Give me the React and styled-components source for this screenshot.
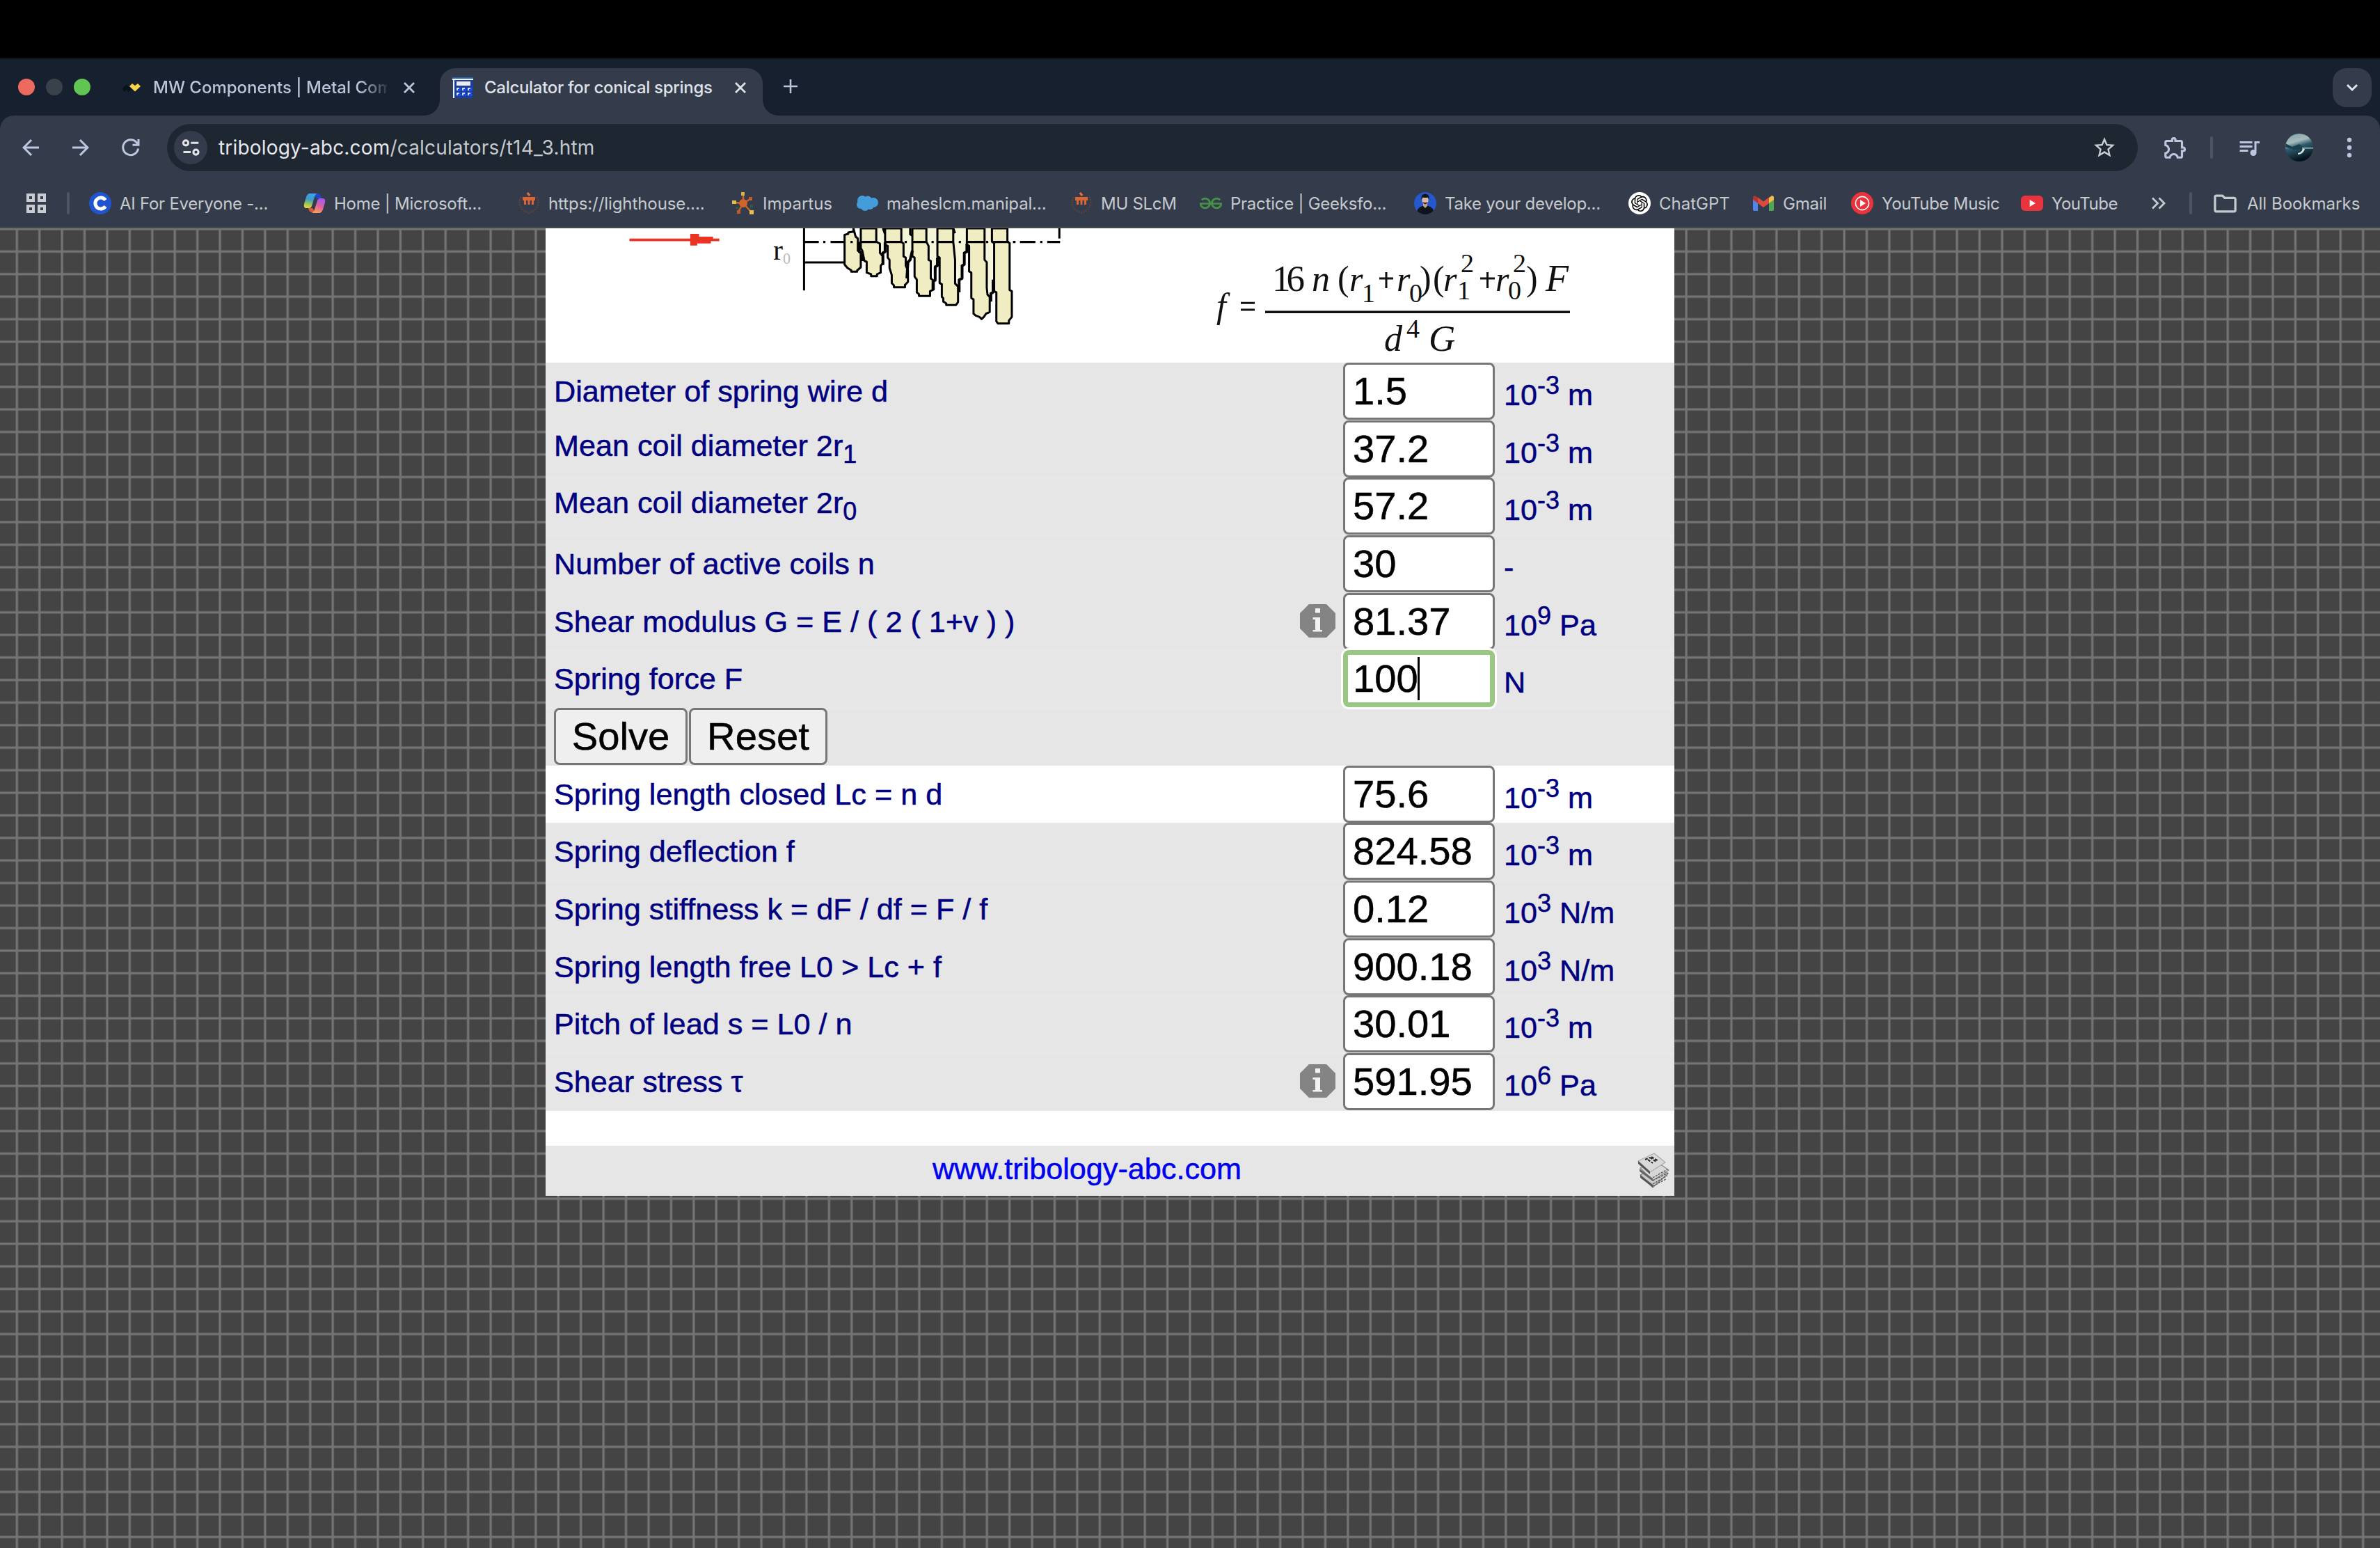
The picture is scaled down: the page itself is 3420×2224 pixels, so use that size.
import React from "react";
import styled, { createGlobalStyle, css } from "styled-components";
import {
  MdArrowBack,
  MdArrowForward,
  MdStarBorder,
  MdOutlineExtension,
  MdQueueMusic,
  MdOutlineFolder,
} from "react-icons/md";
import { SiOpenai, SiGeeksforgeeks } from "react-icons/si";

const Global = createGlobalStyle`
  * { box-sizing: border-box; }
  html, body { margin: 0; padding: 0; background: #000; }
  body { width: 3420px; height: 2224px; overflow: hidden; }
`;

const ui = `Inter, "Liberation Sans", sans-serif`;
const arial = `"Liberation Sans", Arial, sans-serif`;

const Screen = styled.div`
  width: 3420px;
  height: 2224px;
  display: flex;
  flex-direction: column;
  overflow: hidden;
`;

const Notch = styled.div`
  flex: none;
  height: 84px;
  background: #000;
`;

/* ---------- browser chrome ---------- */

const TabStrip = styled.div`
  flex: none;
  height: 82px;
  background: #17202e;
  display: flex;
  align-items: flex-start;
  font-family: ${ui};
`;

const Lights = styled.div`
  display: flex;
  gap: 16px;
  padding: 29px 0 0 26px;
  width: 174px;
`;

const Light = styled.span`
  width: 24px;
  height: 24px;
  border-radius: 50%;
  background: ${(p) => p.$color};
`;

const Tab = styled.div`
  position: relative;
  display: flex;
  align-items: center;
  height: 68px;
  margin-top: 14px;
  padding: 0 0 12px ${(p) => p.$pad}px;
  width: ${(p) => p.$width}px;
  font-size: 24px;
  font-weight: 450;
  color: ${(p) => (p.$active ? "#dfe1e8" : "#bcc4da")};
  ${(p) =>
    p.$active &&
    css`
      background: #343c4b;
      border-radius: 22px 22px 0 0;
      &::before,
      &::after {
        content: "";
        position: absolute;
        bottom: 0;
        width: 22px;
        height: 22px;
      }
      &::before {
        left: -22px;
        background: radial-gradient(circle at 0 0, transparent 21.5px, #343c4b 22px);
      }
      &::after {
        right: -22px;
        background: radial-gradient(circle at 100% 0, transparent 21.5px, #343c4b 22px);
      }
    `}
`;

const TabTitle = styled.span`
  flex: none;
  width: ${(p) => p.$width}px;
  margin-left: ${(p) => p.$gap}px;
  white-space: nowrap;
  line-height: 36px;
  letter-spacing: ${(p) => p.$ls}px;
  ${(p) =>
    p.$fade &&
    css`
      mask-image: linear-gradient(90deg, #000 88%, rgba(0, 0, 0, 0.15) 100%);
    `}
`;

const CloseButton = styled.span`
  display: flex;
  margin-left: ${(p) => p.$gap}px;
`;

const NewTab = styled.span`
  display: flex;
  margin: 30px 0 0 30px;
`;

const TabSearch = styled.span`
  display: flex;
  align-items: center;
  justify-content: center;
  width: 56px;
  height: 56px;
  margin: 14px 12px 0 auto;
  border-radius: 20px;
  background: #343c4b;
`;

const ChromeBody = styled.div`
  flex: none;
  height: 162px;
  background: #17202e;
`;

const ChromePanel = styled.div`
  height: 162px;
  background: #343c4b;
  border-bottom: 2px solid #46484c;
  border-radius: 20px 20px 0 0;
  font-family: ${ui};
`;

const Toolbar = styled.div`
  display: flex;
  align-items: center;
  height: 92px;
  padding: 0 29px 0 26px;
  color: #bcc6df;
`;

const NavButton = styled.span`
  display: flex;
  width: 36px;
  margin-right: ${(p) => p.$after}px;
`;

const Omnibox = styled.div`
  display: flex;
  align-items: center;
  width: 2832px;
  height: 68px;
  padding: 0 30px 0 10px;
  border-radius: 34px;
  background: #1d2631;
`;

const SiteInfo = styled.span`
  display: flex;
  align-items: center;
  justify-content: center;
  width: 48px;
  height: 48px;
  border-radius: 50%;
  background: #343c4b;
`;

const Address = styled.span`
  flex: 1;
  margin-left: 16px;
  font-size: 28px;
  letter-spacing: 0.18px;
  color: #c5c8cd;
  b {
    font-weight: 400;
    color: #e6e7ec;
  }
`;

const Icon = styled.span`
  display: flex;
  flex: none;
  color: ${(p) => p.$color || "inherit"};
  margin-left: ${(p) => p.$left || 0}px;
`;

const Divider = styled.span`
  flex: none;
  width: 4px;
  height: 32px;
  margin-left: ${(p) => p.$left}px;
  border-radius: 2px;
  background: #4c5565;
`;

const BookmarkBar = styled.div`
  display: flex;
  align-items: center;
  height: 68px;
  padding-left: 38px;
  color: #c6c9ce;
  font-size: 24px;
`;

const Bookmarks = styled.div`
  display: flex;
  align-items: center;
  margin-left: 28px;
`;

const Bookmark = styled.span`
  display: flex;
  align-items: center;
  flex: none;
  gap: 12px;
  width: ${(p) => p.$width}px;
  white-space: nowrap;
  letter-spacing: ${(p) => p.$ls || 0}px;
  svg {
    flex: none;
  }
`;

/* ---------- page ---------- */

const line = "#747474";
const clear = "rgba(116,116,116,0)";

const Page = styled.main`
  flex: 1;
  padding-left: 784px;
  background:
    repeating-linear-gradient(90deg, ${clear} 21.7px, ${line} 23.6px, ${line} 25px, ${clear} 26.9px, ${clear} 54.117px),
    repeating-linear-gradient(180deg, ${clear} -1.6px, ${line} 0.3px, ${line} 1.7px, ${clear} 3.6px, ${clear} 30.8px),
    #444;
`;

const Sheet = styled.div`
  width: 1622px;
  background: #fff;
  font-family: ${arial};
`;

const Figures = styled.div`
  display: flex;
  height: 193px;
`;

const Row = styled.div`
  display: grid;
  grid-template-columns: 1067px 66px 231px 1fr;
  align-items: start;
  height: 82.66px;
  padding-left: 12px;
  background: ${(p) => (p.$white ? "#fff" : "#e6e6e6")};
  box-shadow: ${(p) => (p.$rule ? "inset 0 1px 0 #ebebeb" : "none")};
  color: #000080;
  font-size: 43.2px;
  -webkit-text-stroke: 0.5px currentColor;
`;

const Label = styled.span`
  line-height: 48px;
  padding-top: ${(p) => p.$top}px;
  white-space: nowrap;
  sub {
    font-size: 36px;
    line-height: 0;
    vertical-align: -10px;
  }
`;

const InfoSlot = styled.span`
  padding: 16px 0 0 5px;
  line-height: 0;
`;

const Field = styled.span`
  display: flex;
  align-items: center;
  width: 218px;
  height: 82px;
  margin-left: 1px;
  padding: 0 0 0 11px;
  border: 3px solid #767676;
  border-radius: 8px;
  background: #fff;
  color: #000;
  font-size: 56.2px;
  line-height: 66px;
  ${(p) =>
    p.$focus &&
    css`
      position: relative;
      border: 7px solid #9bc784;
      padding-left: 7px;
      outline: 3px solid #fff;
    `}
`;

const Caret = styled.i`
  width: 3px;
  height: 62px;
  margin-left: -1px;
  background: #000;
`;

const Unit = styled.span`
  padding: 22px 0 0 1px;
  line-height: 48px;
  white-space: nowrap;
  sup {
    font-size: 36px;
    line-height: 0;
    vertical-align: 15.6px;
  }
`;

const ButtonRow = styled.div`
  display: flex;
  gap: 2px;
  height: 82.66px;
  padding-left: 12px;
  background: #e6e6e6;
  box-shadow: inset 0 1px 0 #ebebeb;
`;

const Button = styled.button`
  width: ${(p) => p.$width}px;
  height: 82px;
  padding: 0;
  border: 3px solid #767676;
  border-radius: 8px;
  background: #efefef;
  color: #000;
  font: 56.2px/66px ${arial};
  -webkit-text-stroke: 0.5px currentColor;
`;

const Spacer = styled.div`
  height: 50px;
`;

const Footer = styled.footer`
  display: flex;
  align-items: flex-start;
  height: 72px;
  padding-left: 556px;
  background: #e6e6e6;
  color: #0000f0;
  font-size: 43.2px;
  line-height: 48px;
  -webkit-text-stroke: 0.5px currentColor;
`;

const FooterLink = styled.span`
  width: 1013px;
  padding-top: 9px;
`;

const FooterIcon = styled.span`
  padding-top: 10px;
  line-height: 0;
`;

/* ---------- small drawings ---------- */

const Cross = ({ color }) => (
  <svg width="18" height="18" viewBox="0 0 18 18" stroke={color} strokeWidth="2.8">
    <path d="M2 2L16 16M16 2L2 16" />
  </svg>
);

const MwLogo = () => (
  <svg width="28" height="14" viewBox="0 0 28 14">
    <path d="M0 9L7 2L11 6L14 9L10 13L7 10L4 13Z" fill="#07121d" />
    <path d="M11 5L15 1L19 4L23 1L27 5L19 12.5Z" fill="#f8d548" />
  </svg>
);

const CalcLogo = () => (
  <svg width="30" height="30" viewBox="0 0 30 30">
    <rect width="30" height="30" fill="#1b3f9e" />
    <rect width="30" height="3" fill="#2b64a5" />
    <path d="M0 2H30V4H3V30H1V4H0Z" fill="#f4f6fa" />
    <rect x="6" y="6" width="20" height="6" fill="#ececec" />
    {[6, 14, 22].map((x) =>
      [15, 22].map((y) => (
        <g key={`${x}-${y}`}>
          <rect x={x} y={y} width="6" height="5" fill="#1c49e8" />
          <path d={`M${x + 1} ${y + 4}V${y + 1}H${x + 4}`} stroke="#fff" strokeWidth="1.6" fill="none" />
        </g>
      ))
    )}
  </svg>
);

const Reload = () => (
  <svg width="28" height="28" viewBox="0 0 28 28" fill="none" stroke="#bcc6df" strokeWidth="3">
    <path d="M24.6 15.5A11 11 0 1 1 22.5 7L24 9.2" />
    <path d="M25 2V10.3H16.5" />
  </svg>
);

const Tune = () => (
  <svg width="26" height="24" viewBox="0 0 26 24" fill="none" stroke="#e3e4ea" strokeWidth="3">
    <circle cx="6" cy="5.3" r="3.6" />
    <path d="M13.3 5.3H24.3M2.5 18.6H13" />
    <circle cx="20.5" cy="18.6" r="3.6" />
  </svg>
);

const Avatar = () => (
  <svg width="40" height="40" viewBox="0 0 40 40">
    <defs>
      <linearGradient id="sea" x1="0" y1="0" x2="0.3" y2="1">
        <stop offset="0" stopColor="#7fa0a6" />
        <stop offset="0.36" stopColor="#a5bcbd" />
        <stop offset="0.55" stopColor="#2f5a6b" />
        <stop offset="1" stopColor="#06141f" />
      </linearGradient>
      <clipPath id="round">
        <circle cx="20" cy="20" r="20" />
      </clipPath>
    </defs>
    <g clipPath="url(#round)">
      <rect width="40" height="40" fill="url(#sea)" />
      <path d="M0 14L10 19L20 15L25 19L32 21L28 24L20 31L18 29L22 23L12 23L0 19Z" fill="#17414f" />
      <path d="M18 30Q26 29 28 22L25 21Q24 27 18 28Z" fill="#dbe6e6" />
      <path d="M24 20H40V21.5H24Z" fill="#a9c2c4" />
    </g>
  </svg>
);

const Dots = () => (
  <svg width="8" height="30" viewBox="0 0 8 30" fill="#bcc6df">
    <circle cx="4" cy="4" r="3.2" />
    <circle cx="4" cy="15" r="3.2" />
    <circle cx="4" cy="26" r="3.2" />
  </svg>
);

const Apps = () => (
  <svg width="28" height="28" viewBox="0 0 28 28" fill="none" stroke="#c9ccd1" strokeWidth="4">
    <path d="M2 2H10V10H2ZM18 2H26V10H18ZM2 18H10V26H2ZM18 18H26V26H18Z" />
  </svg>
);

const Coursera = () => (
  <svg width="32" height="32" viewBox="0 0 32 32">
    <circle cx="16" cy="16" r="16" fill="#2155cf" />
    <path d="M23.5 11.5A8 8 0 1 0 23.5 20.5" fill="none" stroke="#fff" strokeWidth="5" />
  </svg>
);

const Copilot = () => (
  <svg width="32" height="32" viewBox="0 0 32 32">
    <defs>
      <linearGradient id="cpA" x1="0.5" y1="0" x2="0.3" y2="1">
        <stop offset="0" stopColor="#3fa0f0" />
        <stop offset="0.4" stopColor="#3d9bc9" />
        <stop offset="0.7" stopColor="#8fc45a" />
        <stop offset="1" stopColor="#f2d13c" />
      </linearGradient>
      <linearGradient id="cpB" x1="0.6" y1="0" x2="0.3" y2="1">
        <stop offset="0" stopColor="#a55af0" />
        <stop offset="0.5" stopColor="#e0609f" />
        <stop offset="1" stopColor="#f7a355" />
      </linearGradient>
    </defs>
    <path d="M15 2H21Q24 2 25 6L26 9H19L15 4Z" fill="#1d49c8" />
    <path d="M9 2H20Q17 3 16 7L12 20Q11 23 8 23H4Q0 23 1 17L4 7Q6 2 9 2Z" fill="url(#cpA)" />
    <path d="M7 23H13L17 29H13Q9 29 8 26Z" fill="#e4573c" />
    <path d="M23 30H12Q15 29 16 25L20 12Q21 9 24 9H28Q32 9 31 15L28 25Q26 30 23 30Z" fill="url(#cpB)" />
  </svg>
);

const Manipal = () => (
  <svg width="32" height="32" viewBox="0 0 32 32">
    <path d="M5 7Q-1 17 8 26L16 30L24 26Q33 17 27 7" fill="none" stroke="#5a423f" strokeWidth="2.6" strokeDasharray="2 1.6" />
    <path d="M16 6L12.5 2L15 0L18.5 4Z" fill="#e2703c" />
    <path d="M7 7H25V12H23V18H20V12H17.5V18H14.5V12H12V18H9V12H7Z" fill="#dc6536" />
  </svg>
);

const Impartus = () => (
  <svg width="32" height="32" viewBox="0 0 32 32">
    <g stroke="#c9652e" strokeWidth="2.4">
      <path d="M16 16V3M16 16L4 15M16 16L26 10M16 16L9 28M16 16L27 28" />
    </g>
    <circle cx="16" cy="16" r="6" fill="#cf642a" />
    <rect x="13" y="0" width="5" height="5" fill="#dcae45" />
    <rect x="0" y="12" width="6" height="5" fill="#e3bb48" />
    <rect x="24" y="7" width="5" height="5" fill="#c65a2a" />
    <rect x="7" y="26" width="5" height="5" fill="#c65a2a" />
    <rect x="25" y="26" width="6" height="6" fill="#e6c04b" />
    <rect x="5" y="21" width="4" height="3" fill="#2f5c41" />
    <rect x="26" y="18" width="4" height="4" fill="#2f5c41" />
  </svg>
);

const Cloud = () => (
  <svg width="32" height="32" viewBox="0 0 32 32" fill="#459cdb">
    <circle cx="9" cy="12" r="7" />
    <circle cx="17" cy="11" r="5.5" />
    <circle cx="25" cy="15" r="7" />
    <circle cx="7" cy="18" r="6" />
    <circle cx="13" cy="21" r="6" />
    <circle cx="20" cy="19" r="6" />
  </svg>
);

const Portrait = () => (
  <svg width="32" height="32" viewBox="0 0 32 32">
    <clipPath id="face">
      <circle cx="16" cy="16" r="16" />
    </clipPath>
    <g clipPath="url(#face)">
      <rect width="32" height="32" fill="#2458cc" />
      <path d="M3 32Q5 21 12 20H20Q28 21 29 32Z" fill="#101319" />
      <path d="M13 15H19V20L16 23L13 20Z" fill="#c99e87" />
      <ellipse cx="16" cy="11.5" rx="4.6" ry="6.3" fill="#dcb7a2" />
      <path d="M10.5 11Q9 3 16 2.5Q23 3 21.5 11L20 7.5Q16 8.5 12.3 7.5Z" fill="#17130f" />
      <path d="M12 14Q16 21 20 14Q16 16 12 14Z" fill="#3a2a22" />
    </g>
  </svg>
);

const ChatGptBadge = styled.span`
  display: flex;
  align-items: center;
  justify-content: center;
  width: 32px;
  height: 32px;
  border-radius: 50%;
  background: #fff;
  color: #000;
`;

const GmailLogo = () => (
  <svg width="32" height="32" viewBox="0 0 32 32">
    <path d="M1 9V25Q1 27 3 27H8V14Z" fill="#4f86ec" />
    <path d="M31 9V25Q31 27 29 27H24V14Z" fill="#4fa756" />
    <path d="M24 8L27.5 5.5Q31 4.5 31 8.5V11L24 16Z" fill="#f2bc42" />
    <path d="M8 8L4.5 5.5Q1 4.5 1 8.5V11L8 16Z" fill="#b6362b" />
    <path d="M8 7.5L16 13.5L24 7.5V16L16 22L8 16Z" fill="#da4b3e" />
  </svg>
);

const YtMusic = () => (
  <svg width="32" height="32" viewBox="0 0 32 32">
    <circle cx="16" cy="16" r="16" fill="#e9333d" />
    <circle cx="16" cy="16" r="9.6" fill="none" stroke="#fff" strokeWidth="1.6" />
    <path d="M13 11L21 16L13 21Z" fill="#fff" />
  </svg>
);

const YouTube = () => (
  <svg width="32" height="32" viewBox="0 0 32 32">
    <rect y="5" width="32" height="22" rx="6" fill="#e9333d" />
    <path d="M12.7 11L21 16L12.7 21Z" fill="#fff" />
  </svg>
);

const InfoIcon = () => (
  <svg width="51" height="48" viewBox="0 0 51 48">
    <path d="M13 0H38L51 13V35L38 48H13L0 35V13Z" fill="#848484" />
    <path d="M22 6H29V12.5H22ZM18.5 19H29V37H32V39.5H18.5V37H22V22H18.5Z" fill="#f2f2f2" />
  </svg>
);

const Books = () => (
  <svg width="46" height="52" viewBox="0 0 46 52" strokeLinejoin="round">
    <path d="M4 32L24 22L44 30L22 50Z" fill="#cacaca" stroke="#777" strokeWidth="1.2" />
    <path d="M4 32L22 46L22 50L4 36Z" fill="#555" />
    <path d="M22 48L41 38M22 45L43 33" stroke="#555" strokeWidth="1.4" strokeDasharray="3 1.5" />
    <path d="M4 22L26 12L45 25L22 40Z" fill="#d8d8d8" stroke="#888" strokeWidth="1.2" />
    <path d="M3 23L22 37V41L3 27Z" fill="#666" />
    <path d="M22 40L44 29M22 36L43 24" stroke="#555" strokeWidth="1.4" strokeDasharray="3 1.5" />
    <path d="M1 12L24 1L40 14L18 28Z" fill="#d9d9d9" stroke="#aaa" strokeWidth="1.2" />
    <path d="M1 12L18 27V31L1 16Z" fill="#555" />
    <path d="M11 10L18 7M18 7L27 13M20 6L30 12M15 10L22 15" stroke="#222" strokeWidth="2" strokeDasharray="4 2" />
  </svg>
);

const coil = "#efedc1";
const pale = "#f5f5da";

const Spring = () => (
  <svg
    width="820"
    height="193"
    viewBox="26.4 54 1549 579"
    preserveAspectRatio="none"
    fill="none"
    stroke="#000"
    strokeWidth="3"
    strokeLinejoin="round"
  >
    <style>{`.s path{vector-effect:non-scaling-stroke}`}</style>
    <g className="s">
      <path d="M254 104H498" stroke="#ea3323" strokeWidth="3.6" />
      <path d="M419 78H443V90H481V100H488V108H475V119H438V128H419Z" fill="#ea3323" stroke="none" />
      <path d="M728 54V322M728 201H838" />
      <path d="M922 54H945L950 150L940 215L930 140Z" fill={pale} stroke="none" />
      <path d="M990 54H1020V170L1010 240L995 120Z" fill={pale} stroke="none" />
      <path d="M1058 54H1090V200L1080 260L1065 120Z" fill={pale} stroke="none" />
      <path d="M1133 54H1170V150L1150 300L1137 190Z" fill={pale} stroke="none" />
      <path d="M1218 54H1240V260L1232 350L1222 180Z" fill={pale} stroke="none" />
      <path d="M862 54L868 90L874 98V150L882 160V222L872 236V241H856V235L846 225L838 210V82L848 78V72L862 68Z" fill={coil} />
      <path d="M882 54H924V112L934 120V160L942 175V205L936 215V245L926 252V260H910V252L898 245V198L892 195L886 150L882 140Z" fill={coil} />
      <path d="M942 54L948 80M948 54H992V112L998 120V175L1004 180V215L1010 235V285L1002 298V308H972V300L966 290V255L960 225V190L955 180V130L948 125Z" fill={coil} />
      <path d="M1016 54V80L1022 85V112M1022 54H1060V112L1066 130V190L1072 195V270L1080 280V318L1070 325V346H1040V338L1034 330V275L1028 262V180L1022 175Z" fill={coil} />
      <path d="M1090 54H1133V112L1138 190V292L1146 305V372L1140 385H1114V378L1106 370V355L1102 350V295L1096 290V180L1090 175Z" fill={coil} />
      <path d="M1133 54L1138 75M1170 54H1218V190L1224 200V310L1226 340L1232 350V415L1222 422L1216 436L1210 445L1204 436L1194 430L1188 422V360L1182 355V245L1176 240V130L1170 125Z" fill={coil} />
      <path d="M1238 54H1280V112L1286 118V320L1292 325V436L1284 452V464H1254L1250 455V330L1244 325V118L1238 112Z" fill={coil} />
      <path d="M878 112V155L886 162V195M948 115V155L942 160V212M1022 150L1016 190L1010 200L1007 270M1090 180V215L1084 220V278L1078 284V318M1170 120V155L1163 160V210L1157 215V270L1149 276V330M1241 275V330L1235 335V370" strokeWidth="4" />
      <path d="M728 113H768M780 113H786M800 113H838M854 113H860M882 113H924M948 113H992M1001 113H1007M1022 113H1060M1074 113H1080M1090 113H1133M1148 113H1154M1170 113H1218M1222 113H1228M1238 113H1284M1295 113H1302M1314 113H1356M1369 113H1375M1388 113H1423" strokeWidth="3.4" />
      <path d="M1421 54V98" />
    </g>
    <g transform="translate(646 186) scale(1.889 3)" stroke="none" fontFamily='"Liberation Serif", serif'>
      <text fontSize="42" x="-1" y="1" fill="#111" textLength="14" lengthAdjust="spacingAndGlyphs">r</text>
      <text fontSize="24" x="13" y="7" fill="#bbb" textLength="11" lengthAdjust="spacingAndGlyphs">0</text>
    </g>
  </svg>
);

const glyphs = [
  ["f", 1748, 456, 50, 1],
  ["16", 1828, 418, 53, 0, 47],
  ["n", 1885, 418, 52, 1],
  ["(", 1922, 417, 50, 0],
  ["r", 1939, 418, 50, 1],
  ["1", 1957, 434, 38, 0],
  ["r", 2007, 418, 50, 1],
  ["0", 2025, 434, 38, 0],
  [")", 2040, 417, 50, 0],
  ["(", 2059, 417, 50, 0],
  ["r", 2074, 418, 50, 1],
  ["2", 2099, 391, 38, 0],
  ["1", 2094, 430, 38, 0],
  ["r", 2149, 418, 50, 1],
  ["2", 2174, 391, 38, 0],
  ["0", 2167, 430, 38, 0],
  [")", 2193, 417, 50, 0],
  ["F", 2221, 418, 54, 1],
  ["d", 1989, 504, 52, 1],
  ["4", 2021, 485, 38, 0],
  ["G", 2053, 504, 53, 1],
];

const Formula = () => (
  <svg width="802" height="193" viewBox="1604 328 802 193" fill="#111" fontFamily='"Liberation Serif", "Times New Roman", serif'>
    {glyphs.map(([t, x, y, size, italic, len], i) => (
      <text key={i} x={x} y={y} fontSize={size} fontStyle={italic ? "italic" : "normal"} textLength={len}>
        {t}
      </text>
    ))}
    <g stroke="#111" strokeWidth="3">
      <path d="M1818 448.2H2256" strokeWidth="3.6" />
      <path d="M1783 435.3H1803M1783 445H1803" />
      <path d="M1982 400H2002M1992 391V414M2127 400H2148M2137.5 391V414" />
    </g>
  </svg>
);

/* ---------- data ---------- */

const Power = ({ e, children }) => (
  <>
    10<sup>{e}</sup> {children}
  </>
);

const inputs = [
  { label: "Diameter of spring wire d", value: "1.5", unit: <Power e="-3">m</Power> },
  { label: <>Mean coil diameter 2r<sub>1</sub></>, value: "37.2", unit: <Power e="-3">m</Power>, top: 12 },
  { label: <>Mean coil diameter 2r<sub>0</sub></>, value: "57.2", unit: <Power e="-3">m</Power>, rule: true, top: 12 },
  { label: "Number of active coils n", value: "30", unit: "-", rule: true },
  { label: "Shear modulus G = E / ( 2 ( 1+v ) )", value: "81.37", unit: <Power e="9">Pa</Power>, info: true },
  { label: "Spring force F", value: "100", unit: "N", focus: true, rule: true },
];

const results = [
  { label: "Spring length closed Lc = n d", value: "75.6", unit: <Power e="-3">m</Power>, white: true },
  { label: "Spring deflection f", value: "824.58", unit: <Power e="-3">m</Power>, rule: true },
  { label: "Spring stiffness k = dF / df = F / f", value: "0.12", unit: <Power e="3">N/m</Power>, rule: true },
  { label: "Spring length free L0 > Lc + f", value: "900.18", unit: <Power e="3">N/m</Power> },
  { label: "Pitch of lead s = L0 / n", value: "30.01", unit: <Power e="-3">m</Power>, rule: true },
  { label: "Shear stress τ", value: "591.95", unit: <Power e="6">Pa</Power>, info: true, rule: true },
];

const bookmarks = [
  { icon: <Coursera />, text: "AI For Everyone -...", width: 308, ls: -0.25 },
  { icon: <Copilot />, text: "Home | Microsoft...", width: 308, ls: -0.25 },
  { icon: <Manipal />, text: "https://lighthouse....", width: 308, ls: -0.08 },
  { icon: <Impartus />, text: "Impartus", width: 178 },
  { icon: <Cloud />, text: "maheslcm.manipal...", width: 308, ls: -0.15 },
  { icon: <Manipal />, text: "MU SLcM", width: 186, ls: -0.3 },
  { icon: <SiGeeksforgeeks size={32} color="#459149" />, text: "Practice | Geeksfo...", width: 308, ls: -0.25 },
  { icon: <Portrait />, text: "Take your develop...", width: 308, ls: -0.25 },
  { icon: <ChatGptBadge><SiOpenai size={24} /></ChatGptBadge>, text: "ChatGPT", width: 178 },
  { icon: <GmailLogo />, text: "Gmail", width: 142, ls: -0.2 },
  { icon: <YtMusic />, text: "YouTube Music", width: 244, ls: -0.3 },
  { icon: <YouTube />, text: "YouTube", width: 186, ls: -0.5 },
];

const DataRow = ({ row }) => (
  <Row $white={row.white} $rule={row.rule}>
    <Label $top={row.top || 17}>{row.label}</Label>
    <InfoSlot>{row.info && <InfoIcon />}</InfoSlot>
    <Field $focus={row.focus}>
      {row.value}
      {row.focus && <Caret />}
    </Field>
    <Unit>{row.unit}</Unit>
  </Row>
);

export default function App() {
  return (
    <Screen>
      <Global />
      <Notch />
      <TabStrip>
        <Lights>
          <Light $color="#ed6a5e" />
          <Light $color="#39414b" />
          <Light $color="#61c554" />
        </Lights>
        <Tab $width={458} $pad={1}>
          <MwLogo />
          <TabTitle $width={336} $gap={17} $ls={0} $fade>MW Components | Metal Com</TabTitle>
          <CloseButton $gap={23}><Cross color="#bcc4da" /></CloseButton>
        </Tab>
        <Tab $active $width={464} $pad={18}>
          <CalcLogo />
          <TabTitle $width={339} $gap={16} $ls={-0.3}>Calculator for conical springs</TabTitle>
          <CloseButton $gap={20}><Cross color="#dfe1e8" /></CloseButton>
        </Tab>
        <NewTab>
          <svg width="20" height="20" viewBox="0 0 20 20" stroke="#bcc4da" strokeWidth="2.6">
            <path d="M10 0V20M0 10H20" />
          </svg>
        </NewTab>
        <TabSearch>
          <svg width="18" height="12" viewBox="0 0 18 12" fill="none" stroke="#e3e5ec" strokeWidth="3">
            <path d="M2 2L9 9L16 2" />
          </svg>
        </TabSearch>
      </TabStrip>
      <ChromeBody>
        <ChromePanel>
          <Toolbar>
            <NavButton $after={36}><MdArrowBack size={36} /></NavButton>
            <NavButton $after={40}><MdArrowForward size={36} /></NavButton>
            <NavButton $after={30}><Reload /></NavButton>
            <Omnibox>
              <SiteInfo><Tune /></SiteInfo>
              <Address><b>tribology-abc.com</b>/calculators/t14_3.htm</Address>
              <Icon $color="#c9ccd3"><MdStarBorder size={36} /></Icon>
            </Omnibox>
            <Icon $left={35}><MdOutlineExtension size={38} /></Icon>
            <Divider $left={31} />
            <Icon $left={34}><MdQueueMusic size={36} /></Icon>
            <Icon $left={34}><Avatar /></Icon>
            <Icon $left={48}><Dots /></Icon>
          </Toolbar>
          <BookmarkBar>
            <Apps />
            <Divider $left={30} />
            <Bookmarks>
              {bookmarks.map((b) => (
                <Bookmark key={b.text} $width={b.width} $ls={b.ls}>
                  {b.icon}
                  {b.text}
                </Bookmark>
              ))}
            </Bookmarks>
            <Icon $left={1}>
              <svg width="22" height="18" viewBox="0 0 22 18" fill="none" stroke="#c6c9ce" strokeWidth="2.8">
                <path d="M2 1.5L9.5 9L2 16.5M11.5 1.5L19 9L11.5 16.5" />
              </svg>
            </Icon>
            <Divider $left={33} />
            <Icon $left={28}><MdOutlineFolder size={39} /></Icon>
            <Icon $left={12}>All Bookmarks</Icon>
          </BookmarkBar>
        </ChromePanel>
      </ChromeBody>
      <Page>
        <Sheet>
          <Figures>
            <Spring />
            <Formula />
          </Figures>
          {inputs.map((row, i) => (
            <DataRow key={i} row={row} />
          ))}
          <ButtonRow>
            <Button $width={192}>Solve</Button>
            <Button $width={199}>Reset</Button>
          </ButtonRow>
          {results.map((row, i) => (
            <DataRow key={i} row={row} />
          ))}
          <Spacer />
          <Footer>
            <FooterLink>www.tribology-abc.com</FooterLink>
            <FooterIcon><Books /></FooterIcon>
          </Footer>
        </Sheet>
      </Page>
    </Screen>
  );
}
